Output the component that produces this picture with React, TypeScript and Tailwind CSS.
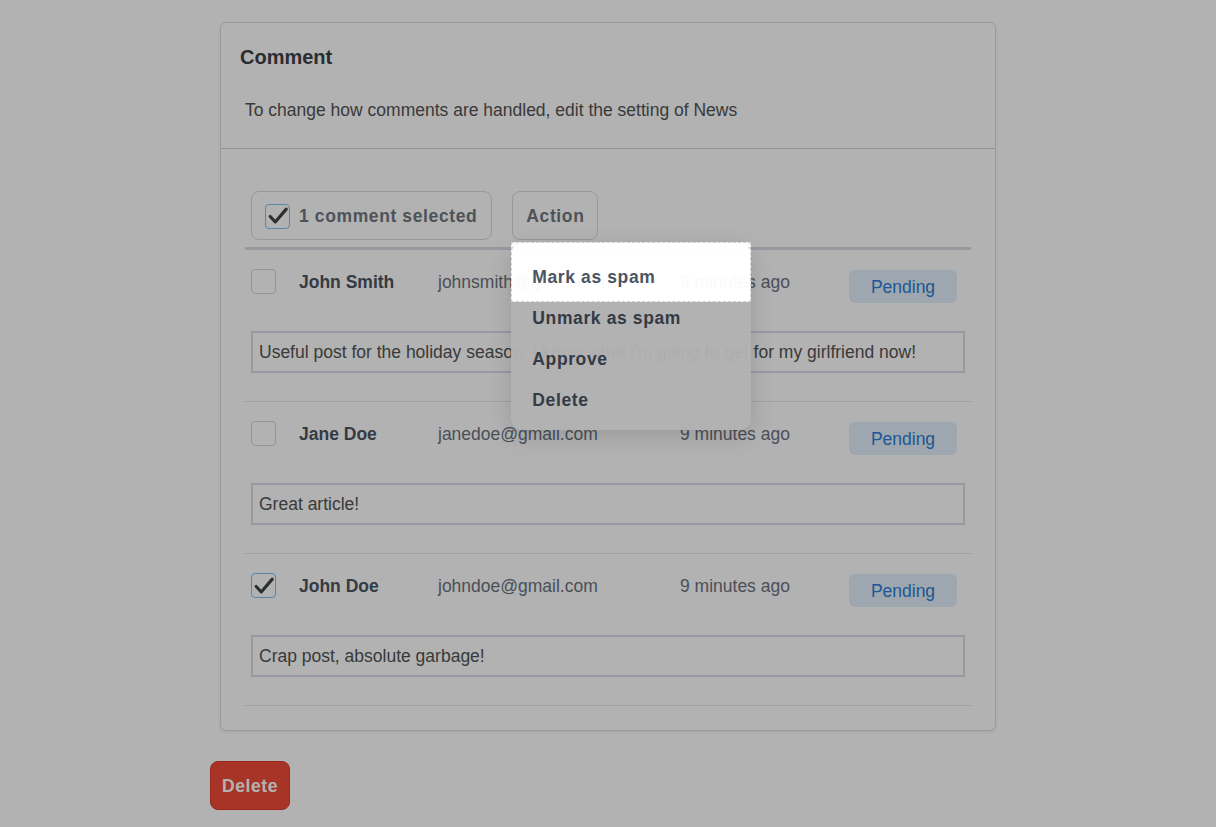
import React from 'react'

type Comment = {
  name: string
  email: string
  time: string
  body: string
  checked: boolean
}

const comments: Comment[] = [
  {
    name: 'John Smith',
    email: 'johnsmith@gmail.com',
    time: '9 minutes ago',
    body: "Useful post for the holiday season. I know what I'm going to get for my girlfriend now!",
    checked: false,
  },
  {
    name: 'Jane Doe',
    email: 'janedoe@gmail.com',
    time: '9 minutes ago',
    body: 'Great article!',
    checked: false,
  },
  {
    name: 'John Doe',
    email: 'johndoe@gmail.com',
    time: '9 minutes ago',
    body: 'Crap post, absolute garbage!',
    checked: true,
  },
]

const Checkbox = ({ checked }: { checked: boolean }) => (
  <span
    className={
      checked
        ? 'flex h-[25px] w-[25px] shrink-0 items-center justify-center rounded-[4px] border border-[#84c0ee] bg-white'
        : 'flex h-[25px] w-[25px] shrink-0 items-center justify-center rounded-[4px] border border-[#d6d6d6] bg-white'
    }
  >
    {checked && (
      <svg viewBox="0 0 24 24" className="h-[22px] w-[22px]" fill="none">
        <path d="M3.5 12.5 L9 18.5 L21 4.5" stroke="#404448" strokeWidth="3.4" strokeLinecap="round" strokeLinejoin="round" />
      </svg>
    )}
  </span>
)

const menuItems = ['Mark as spam', 'Unmark as spam', 'Approve', 'Delete']

export default function App() {
  return (
    <div className="relative min-h-screen overflow-hidden bg-white font-['Liberation_Sans',Arial,sans-serif] text-[17.5px] text-[#535353]">
      <div className="mx-auto w-[796px] pt-[22px] pb-[17px]">
        {/* カード */}
        <div className="mx-[10px] rounded-md border border-[#dedede] bg-white shadow-[0_1px_3px_rgba(0,0,0,0.08)]">
          <div className="border-b border-[#d4d4d8] px-[19px] pt-5 pb-[25px]">
            <h2 className="text-xl leading-7 font-bold text-[#3d4147]">Comment</h2>
            <p className="mt-[26px] pl-[5px] leading-[26px]">
              To change how comments are handled, edit the setting of News
            </p>
          </div>

          <div className="px-6 pt-[42px] pb-6">
            {/* ツールバー */}
            <div className="flex gap-5 border-b-[3px] border-[#dcdbe6] pb-[7px] pl-[6px]">
              <button className="flex h-[49px] items-center gap-[9px] rounded-lg border border-[#dadada] pt-px pr-[14px] pl-[13px] font-bold tracking-[0.035em] text-[#6f7780]">
                <Checkbox checked />
                1 comment selected
              </button>
              <div className="relative">
                <button className="flex h-[49px] items-center rounded-lg border border-[#dadada] px-[13px] pt-px font-bold tracking-[0.035em] text-[#6f7780]">
                  Action
                </button>
                {/* ドロップダウン */}
                <div className="absolute top-full left-[-1px] z-10 mt-[3px] w-[240px] rounded-xl bg-white/[0.96] pt-[13px] pb-[10px] shadow-[0_6px_24px_rgba(0,0,0,0.14)]">
                  {menuItems.map((item) => (
                    <div key={item} className="flex h-[41px] items-center px-[21px] pt-px font-bold tracking-[0.035em] text-[#4b5563]">
                      {item}
                    </div>
                  ))}
                  {/* ツアーのハイライト */}
                  <div className="absolute top-[-1px] right-0 left-0 h-[60px] border border-dashed border-[#cfcfcf] shadow-[0_0_0_9999px_rgba(0,0,0,0.3)]" />
                </div>
              </div>
            </div>

            {comments.map((c) => (
              <div key={c.name} className="border-b border-[#e4e4ea] px-[6px] pt-[19px] pb-7">
                <div className="flex h-[34px] items-start">
                  <Checkbox checked={c.checked} />
                  <span className="mt-px ml-[23px] w-[139px] leading-[25px] font-bold text-[#4b5563]">{c.name}</span>
                  <span className="mt-px w-[242px] leading-[25px] text-[#6b7280]">{c.email}</span>
                  <span className="mt-px flex-1 leading-[25px] text-[#6b7280]">{c.time}</span>
                  <span className="mt-px mr-2 flex h-[33px] w-[108px] items-center justify-center rounded-md bg-[#e3effb] pt-px text-[#2a7fd4]">
                    Pending
                  </span>
                </div>
                <div className="mt-7 flex h-[42px] items-center border-2 border-[#dddce9] px-[6px] pt-px">
                  {c.body}
                </div>
              </div>
            ))}
          </div>
        </div>

        <button className="mt-[30px] flex h-[49px] w-[80px] items-center justify-center rounded-lg border border-[#d93a2a] bg-[#f04b37] pt-px font-bold tracking-[0.035em] text-white">
          Delete
        </button>
      </div>
    </div>
  )
}
